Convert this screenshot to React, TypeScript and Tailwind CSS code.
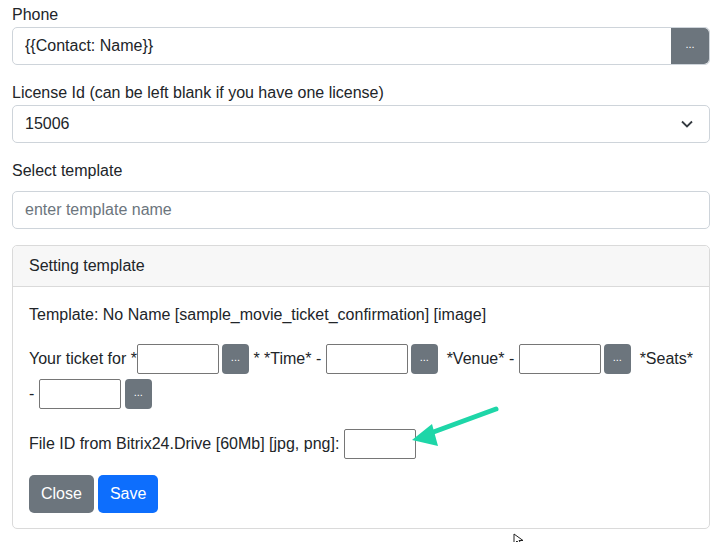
import React from "react";

function DotsButton({ big }: { big?: boolean }) {
  return (
    <button
      className={
        big
          ? "w-[38px] h-full bg-[#6c757d] text-white text-[11px] rounded-r-[5px] leading-none pb-1"
          : "w-[27px] h-[30px] bg-[#6c757d] text-white text-[11px] rounded-[4px] leading-none pb-1 shrink-0"
      }
    >
      ...
    </button>
  );
}

function SmallInput({ w = "w-[82px]" }: { w?: string }) {
  return <input className={`${w} h-[30px] border border-[#767676] rounded-[2px] shrink-0 bg-white`} />;
}

export default function App() {
  return (
    <div
      className="relative min-h-screen bg-white text-[#212529] text-[16px] leading-6 px-3 pt-[3px]"
      style={{ fontFamily: '"Liberation Sans", Arial, sans-serif' }}
    >
      {/* Phone */}
      <label className="block">Phone</label>
      <div className="flex h-[38px] border border-[#ced4da] rounded-[5px]">
        <input
          className="flex-1 px-3 outline-none rounded-l-[5px]"
          defaultValue="{{Contact: Name}}"
        />
        <DotsButton big />
      </div>

      {/* License */}
      <label className="block mt-4">License Id (can be left blank if you have one license)</label>
      <div className="relative flex items-center h-[38px] border border-[#ced4da] rounded-[5px] px-3">
        <span>15006</span>
        <svg className="absolute right-[16px] top-[14px]" width="12" height="8" viewBox="0 0 12 8">
          <polyline points="1,1.5 6,6.5 11,1.5" fill="none" stroke="#343a40" strokeWidth="1.8" />
        </svg>
      </div>

      {/* Select template */}
      <label className="block mt-4 mb-2">Select template</label>
      <input
        className="block w-full h-[38px] border border-[#ced4da] rounded-[5px] px-3 placeholder:text-[#6c757d] outline-none"
        placeholder="enter template name"
      />

      {/* Card */}
      <div className="mt-4 border border-[#dadada] rounded-[5px]">
        <div className="bg-[#f7f7f7] border-b border-[#dadada] px-4 py-2 rounded-t-[5px]">Setting template</div>
        <div className="px-4 pt-4 pb-[15px]">
          <div>Template: No Name [sample_movie_ticket_confirmation] [image]</div>

          <div className="flex items-center mt-[17px] h-[30px] whitespace-pre">
            <span>Your ticket for *</span>
            <SmallInput />
            <span className="w-1" />
            <DotsButton />
            <span> * *Time* - </span>
            <SmallInput />
            <span className="w-1" />
            <DotsButton />
            <span>  *Venue* - </span>
            <SmallInput />
            <span className="w-1" />
            <DotsButton />
            <span>  *Seats*</span>
          </div>
          <div className="flex items-center mt-[5px] h-[30px] whitespace-pre">
            <span>- </span>
            <SmallInput />
            <span className="w-1" />
            <DotsButton />
          </div>

          <div className="flex items-center mt-5 h-[30px] whitespace-pre">
            <span>File ID from Bitrix24.Drive [60Mb] [jpg, png]: </span>
            <SmallInput w="w-[72px]" />
          </div>

          <div className="flex gap-1 mt-[16px]">
            <button className="h-[38px] px-3 bg-[#6c757d] text-white rounded-[5px]">Close</button>
            <button className="h-[38px] px-3 bg-[#0d6efd] text-white rounded-[5px]">Save</button>
          </div>
        </div>
      </div>

      {/* annotation arrow */}
      <svg className="absolute left-0 top-0 pointer-events-none" width="722" height="542">
        <line x1="496" y1="409" x2="428" y2="434" stroke="#1ed6a8" strokeWidth="5" strokeLinecap="round" />
        <polygon points="412,440 432,424 438,446" fill="#1ed6a8" />
      </svg>

      {/* mouse cursor */}
      <svg className="absolute left-[513px] top-[533px] pointer-events-none" width="12" height="12" viewBox="0 0 12 12">
        <path d="M1 1 L1 11 L4 8 L7 12 L8.5 11 L6 7.5 L10 7.5 Z" fill="white" stroke="#222" strokeWidth="1" />
      </svg>
    </div>
  );
}
